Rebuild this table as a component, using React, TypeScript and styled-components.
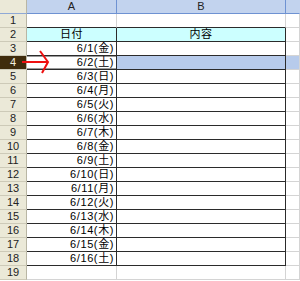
import React from 'react'
import styled, { createGlobalStyle, css } from 'styled-components'

const GlobalStyle = createGlobalStyle`
    html, body {
        margin: 0;
        padding: 0;
        background: #ffffff;
        overflow: hidden;
    }
`

const WEEK = ['日', '月', '火', '水', '木', '金', '土']
const START_DOW = 5 // 6/1 is a Friday
const ROW_COUNT = 19
const SELECTED_ROW = 4

const TABLE_LINE = '#2b2b2b'
const GRID_LINE = '#d4d4d4'

const Sheet = styled.div`
    position: relative;
    display: grid;
    grid-template-columns: 27px 90px 169px 1fr;
    grid-auto-rows: 14px;
    width: 300px;
    height: 281px;
    font-family: 'Liberation Sans', 'Noto Sans CJK JP', sans-serif;
    font-size: 11px;
    color: #000;
    overflow: hidden;
`

const Corner = styled.div`
    background: #ebe9d8;
    border-right: 1px solid #b9b6a4;
    border-bottom: 1px solid #8fa9d6;
`

const ColHeader = styled.div<{ $edge?: boolean }>`
    display: flex;
    align-items: center;
    justify-content: center;
    background: #c2d3ee;
    border-right: 1px solid ${p => (p.$edge ? 'transparent' : '#6e92d2')};
    border-bottom: 1px solid #6e92d2;
    font-size: 11px;
    line-height: 1;
    color: #222;
`

const RowHeader = styled.div<{ $active?: boolean }>`
    display: flex;
    align-items: center;
    justify-content: center;
    background: ${p => (p.$active ? '#3f2c0c' : '#ebe9d8')};
    color: ${p => (p.$active ? '#f4f0e0' : '#222')};
    border-right: 1px solid #b9b6a4;
    border-bottom: 1px solid #cdcab8;
    font-size: 11px;
    line-height: 1;
`

type CellProps = {
    $boxed?: boolean
    $boxedBottom?: boolean
    $fill?: string
    $align?: 'left' | 'right' | 'center'
    $active?: boolean
}

const Cell = styled.div<CellProps>`
    box-sizing: border-box;
    display: flex;
    align-items: center;
    justify-content: ${p => (p.$align === 'right' ? 'flex-end' : p.$align === 'center' ? 'center' : 'flex-start')};
    padding: 0 2px 0 2px;
    background: ${p => p.$fill || '#ffffff'};
    border-right: 1px solid ${p => (p.$boxed ? TABLE_LINE : GRID_LINE)};
    border-bottom: 1px solid ${p => (p.$boxedBottom ? TABLE_LINE : GRID_LINE)};
    overflow: hidden;
    white-space: nowrap;
    ${p =>
        p.$active &&
        css`
            box-shadow: inset 0 1px 0 #9a9a9a, inset 0 -1px 0 #9a9a9a;
        `}
`

const CellText = styled.span`
    display: block;
    height: 13px;
    line-height: 13px;
    font-size: 11px;
    letter-spacing: 0.6px;
`

const Arrow = styled.svg`
    position: absolute;
    left: 20px;
    top: 50px;
    width: 32px;
    height: 24px;
    pointer-events: none;
`

type Row = { label?: string; body?: string }

function buildRows(): Row[] {
    const rows: Row[] = [{}, { label: '日付', body: '内容' }]
    for (let d = 1; d <= 16; d++) {
        const dow = WEEK[(START_DOW + d - 1) % 7]
        rows.push({ label: `6/${d}(${dow})` })
    }
    rows.push({})
    return rows
}

export default function App() {
    const rows = buildRows()

    return (
        <>
            <GlobalStyle />
            <Sheet>
                <Corner />
                <ColHeader>A</ColHeader>
                <ColHeader>B</ColHeader>
                <ColHeader $edge />

                {rows.slice(0, ROW_COUNT).map((row, i) => {
                    const n = i + 1
                    const inTable = n >= 2 && n <= 18
                    const bottomBoxed = n >= 1 && n <= 18
                    const isHeader = n === 2
                    const selected = n === SELECTED_ROW
                    return (
                        <React.Fragment key={n}>
                            <RowHeader $active={selected}>{n}</RowHeader>
                            <Cell
                                $boxed={inTable}
                                $boxedBottom={bottomBoxed}
                                $fill={isHeader ? '#ccffff' : undefined}
                                $align={isHeader ? 'center' : 'right'}
                                $active={selected}
                            >
                                {row.label && <CellText>{row.label}</CellText>}
                            </Cell>
                            <Cell
                                $boxed={inTable}
                                $boxedBottom={bottomBoxed}
                                $fill={isHeader ? '#ccffff' : selected ? '#b7cbeb' : undefined}
                                $align="center"
                            >
                                {row.body && <CellText>{row.body}</CellText>}
                            </Cell>
                            <Cell $fill={selected ? '#b7cbeb' : undefined} />
                        </React.Fragment>
                    )
                })}

                <Arrow viewBox="0 0 32 24">
                    <path d="M2 12 H28" stroke="#ee1111" strokeWidth="2" fill="none" />
                    <path d="M20 1 L28 12 L22 23" stroke="#ee1111" strokeWidth="2" fill="none" strokeLinejoin="miter" />
                </Arrow>
            </Sheet>
        </>
    )
}
